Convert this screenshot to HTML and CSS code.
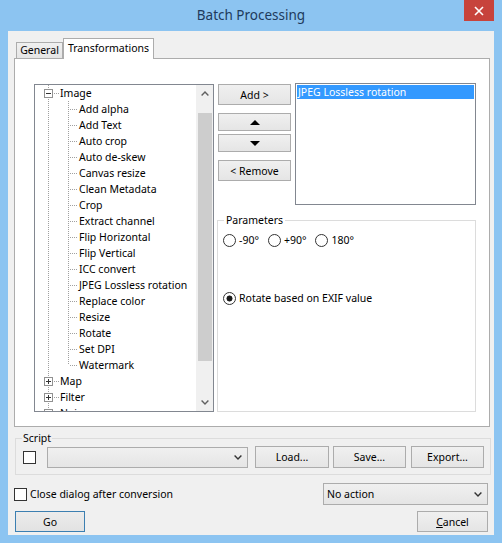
FILE: index.html
```html
<!DOCTYPE html>
<html>
<head>
<meta charset="utf-8">
<title>Batch Processing</title>
<link rel="stylesheet" href="styles.css">
</head>
<body>
<div class="window">
  <div class="titlebar">
    <div class="tb-spacer"></div>
    <div class="title">Batch Processing</div>
    <div class="close"><svg width="10" height="10" viewBox="0 0 10 10"><path d="M1 1L9 9M9 1L1 9" stroke="#fff" stroke-width="1.6"/></svg></div>
  </div>
  <div class="client">
    <div class="tabs">
      <div class="tab">General</div>
      <div class="tab active">Transformations</div>
    </div>
    <div class="panel">
      <div class="tree">
        <div class="tree-body">
          <div class="root"><span class="exp minus"></span><span>Image</span></div>
          <div class="children">
            <div class="child">Add alpha</div>
            <div class="child">Add Text</div>
            <div class="child">Auto crop</div>
            <div class="child">Auto de-skew</div>
            <div class="child">Canvas resize</div>
            <div class="child">Clean Metadata</div>
            <div class="child">Crop</div>
            <div class="child">Extract channel</div>
            <div class="child">Flip Horizontal</div>
            <div class="child">Flip Vertical</div>
            <div class="child">ICC convert</div>
            <div class="child">JPEG Lossless rotation</div>
            <div class="child">Replace color</div>
            <div class="child">Resize</div>
            <div class="child">Rotate</div>
            <div class="child">Set DPI</div>
            <div class="child">Watermark</div>
          </div>
          <div class="root"><span class="exp plus"></span><span>Map</span></div>
          <div class="root"><span class="exp plus"></span><span>Filter</span></div>
          <div class="root"><span class="exp plus"></span><span>Noise</span></div>
        </div>
        <div class="vscroll">
          <div class="sbtn"><svg width="8" height="5" viewBox="0 0 8 5"><path d="M0.6 4.4L4 1L7.4 4.4" fill="none" stroke="#606060" stroke-width="1.4"/></svg></div>
          <div class="track"><div class="thumb"></div></div>
          <div class="sbtn"><svg width="8" height="5" viewBox="0 0 8 5"><path d="M0.6 0.6L4 4L7.4 0.6" fill="none" stroke="#606060" stroke-width="1.4"/></svg></div>
        </div>
      </div>
      <div class="right">
        <div class="top-row">
          <div class="btn-col">
            <button class="btn add">Add &gt;</button>
            <button class="btn arrow up"><svg width="10" height="5" viewBox="0 0 10 5"><path d="M0 5L5 0L10 5Z" fill="#000"/></svg></button>
            <button class="btn arrow down"><svg width="10" height="5" viewBox="0 0 10 5"><path d="M0 0L5 5L10 0Z" fill="#000"/></svg></button>
            <button class="btn remove">&lt; Remove</button>
          </div>
          <div class="listbox"><div class="sel">JPEG Lossless rotation</div></div>
        </div>
        <fieldset class="group params">
          <legend>Parameters</legend>
          <div class="radio-row">
            <label class="opt"><span class="radio"></span>-90°</label>
            <label class="opt"><span class="radio"></span>+90°</label>
            <label class="opt"><span class="radio"></span>180°</label>
          </div>
          <div class="radio-row exif">
            <label class="opt"><span class="radio checked"></span>Rotate based on EXIF value</label>
          </div>
        </fieldset>
      </div>
    </div>
    <fieldset class="group script">
      <legend>Script</legend>
      <div class="script-row">
        <span class="check"></span>
        <div class="combo script-combo"><span class="combo-text"></span><svg width="8" height="5" viewBox="0 0 8 5"><path d="M0.6 0.6L4 4L7.4 0.6" fill="none" stroke="#333" stroke-width="1.4"/></svg></div>
        <button class="btn load">Load...</button>
        <button class="btn save">Save...</button>
        <button class="btn export">Export...</button>
      </div>
    </fieldset>
    <div class="action-row">
      <label class="close-opt"><span class="check"></span>Close dialog after conversion</label>
      <div class="combo action-combo"><span class="combo-text">No action</span><svg width="8" height="5" viewBox="0 0 8 5"><path d="M0.6 0.6L4 4L7.4 0.6" fill="none" stroke="#333" stroke-width="1.4"/></svg></div>
    </div>
    <div class="button-row">
      <button class="btn go">Go</button>
      <button class="btn cancel"><u>C</u>ancel</button>
    </div>
  </div>
</div>
</body>
</html>
```
FILE: styles.css
```css
* { box-sizing: border-box; }
html, body { margin: 0; padding: 0; }
body {
  width: 502px;
  height: 543px;
  overflow: hidden;
  background: #8cc4f1;
  font-family: "Noto Sans", "Liberation Sans", Arial, sans-serif;
  font-size: 10.5px;
  color: #000;
}
.window { height: 543px; display: flex; flex-direction: column; }

.titlebar {
  height: 31px;
  flex: none;
  display: grid;
  grid-template-columns: 1fr auto 1fr;
}
.title {
  font-family: "Noto Sans", sans-serif;
  font-size: 13.5px;
  line-height: 31px;
  color: #1e3a5c;
}
.close {
  justify-self: end;
  width: 30px;
  height: 21px;
  margin-right: 8px;
  background: #c7433c;
  display: flex;
  align-items: center;
  justify-content: center;
}

.client {
  flex: 1;
  margin: 0 8px 8px;
  background: #f0f0f0;
  padding: 7px 4px 0 6px;
  display: flex;
  flex-direction: column;
}

.tabs {
  display: flex;
  align-items: flex-end;
  height: 21px;
  margin-bottom: -1px;
  padding-left: 2px;
  position: relative;
  z-index: 1;
}
.tab {
  height: 16px;
  width: 47px;
  margin-bottom: 1px;
  border: 1px solid #acacac;
  border-bottom: none;
  background: linear-gradient(#f0f0f0, #e5e5e5);
  text-align: center;
  line-height: 15px;
}
.tab.active {
  width: 91px;
  height: 21px;
  margin-bottom: 0;
  background: #fff;
  line-height: 19px;
}

.panel {
  height: 369px;
  flex: none;
  border: 1px solid #acacac;
  background: #fff;
  display: flex;
  align-items: flex-start;
  padding: 24px 13px 0 19px;
}

.tree {
  width: 180px;
  height: 328px;
  margin-top: 1px;
  border: 1px solid #828790;
  display: flex;
}
.tree-body {
  flex: 1;
  overflow: hidden;
  background: repeating-linear-gradient(to bottom, #a0a0a0 0 1px, transparent 1px 2px) 13px 0 / 1px 100% no-repeat;
}
.root {
  height: 16px;
  line-height: 16px;
  display: flex;
  align-items: center;
  padding-left: 9px;
  background: repeating-linear-gradient(to right, #a0a0a0 0 1px, transparent 1px 2px) 19px 8px / 6px 1px no-repeat;
}
.exp {
  width: 9px;
  height: 9px;
  margin-right: 7px;
  border: 1px solid #919191;
  background-color: #fff;
}
.exp.minus {
  background: linear-gradient(#333, #333) center / 5px 1px no-repeat, #fff;
}
.exp.plus {
  background: linear-gradient(#333, #333) center / 5px 1px no-repeat, linear-gradient(#333, #333) center / 1px 5px no-repeat, #fff;
}
.children {
  background: repeating-linear-gradient(to bottom, #a0a0a0 0 1px, transparent 1px 2px) 33px 0 / 1px calc(100% - 8px) no-repeat;
}
.child {
  height: 16px;
  line-height: 16px;
  padding-left: 44px;
  white-space: nowrap;
  background: repeating-linear-gradient(to right, #a0a0a0 0 1px, transparent 1px 2px) 35px 8px / 8px 1px no-repeat;
}

.vscroll {
  width: 17px;
  flex: none;
  background: #f0f0f0;
  display: flex;
  flex-direction: column;
}
.sbtn {
  height: 17px;
  flex: none;
  display: flex;
  align-items: center;
  justify-content: center;
}
.track { flex: 1; padding: 11px 1px 0 2px; }
.thumb { height: 248px; background: #cdcdcd; }

.right {
  width: 259px;
  margin-left: 3px;
  display: flex;
  flex-direction: column;
}
.top-row { display: flex; }
.btn-col {
  width: 73px;
  margin-left: 1px;
  margin-right: 4px;
  display: flex;
  flex-direction: column;
}
.btn {
  font-family: "Noto Sans", "Liberation Sans", Arial, sans-serif;
  font-size: 10.5px;
  color: #000;
  border: 1px solid #acacac;
  background: linear-gradient(#f0f0f0, #e5e5e5);
  padding: 0;
  margin: 0;
  height: 21px;
  display: flex;
  align-items: center;
  justify-content: center;
}
.btn u { text-decoration: underline; }
.add { margin-top: 1px; }
.arrow { height: 18px; }
.arrow.up { margin-top: 8px; }
.arrow.down { margin-top: 3px; }
.remove { margin-top: 8px; }

.listbox {
  width: 181px;
  height: 122px;
  border: 1px solid #828790;
  background: #fff;
  padding: 1px;
}
.sel {
  height: 14px;
  line-height: 14px;
  background: #3399ff;
  color: #fff;
  padding-left: 1px;
  white-space: nowrap;
}

.group {
  margin: 0;
  border: 1px solid #dcdcdc;
  padding: 0 5px;
  min-width: 0;
}
.group legend {
  padding: 0 2px;
  margin-left: 1px;
  line-height: 14px;
  height: 14px;
}
.params {
  margin-top: 8px;
  height: 199px;
}
.radio-row {
  display: flex;
  align-items: center;
  height: 16px;
  margin-top: 5px;
  gap: 9px;
}
.radio-row.exif { margin-top: 42px; }
.opt { display: flex; align-items: center; gap: 2px; white-space: nowrap; }
.radio {
  width: 13px;
  height: 13px;
  border: 1px solid #333;
  border-radius: 50%;
  background: #fff;
  margin-right: 1px;
}
.radio.checked {
  background: radial-gradient(circle, #1a1a1a 0 2.7px, #fff 3.3px);
}

.script {
  margin: 4px -1px 0 1px;
  height: 44px;
  padding: 0 6px 0 7px;
}
.script legend { margin-left: -1px; padding: 0 1px; }
.script-row {
  display: flex;
  align-items: center;
  height: 22px;
  margin-top: 1px;
}
.check {
  width: 13px;
  height: 13px;
  border: 1px solid #333;
  background: #fff;
  flex: none;
}
.combo {
  height: 21px;
  border: 1px solid #acacac;
  background: linear-gradient(#f0f0f0, #e5e5e5);
  display: flex;
  align-items: center;
  padding: 0 5px 0 3px;
}
.combo-text { flex: 1; }
.script-combo { width: 201px; margin-left: 11px; }
.load { width: 74px; margin-left: 7px; height: 22px; }
.save { width: 73px; margin-left: 4px; height: 22px; }
.export { width: 73px; margin-left: 5px; height: 22px; }

.action-row {
  display: flex;
  align-items: center;
  justify-content: space-between;
  height: 22px;
  margin-top: 8px;
  padding-right: 2px;
}
.close-opt { display: flex; align-items: center; gap: 3px; }
.action-combo { width: 165px; height: 22px; }

.button-row {
  display: flex;
  justify-content: space-between;
  margin-top: 6px;
  padding: 0 2px 0 1px;
}
.go {
  width: 70px;
  border-color: #3c7fb1;
  background: linear-gradient(#ececec, #e2e2e2);
}
.cancel { width: 71px; }
```
